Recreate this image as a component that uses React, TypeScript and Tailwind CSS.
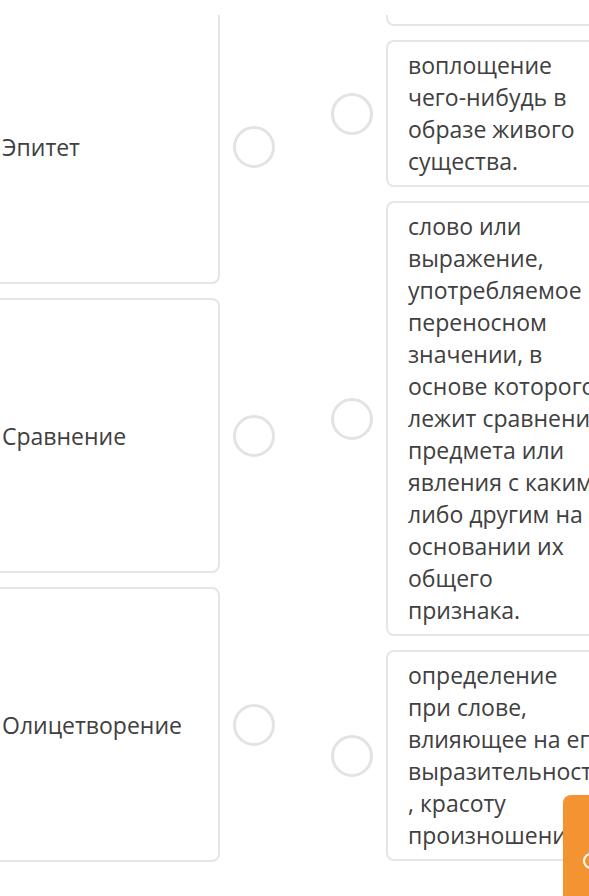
const TERMS = ["Эпитет", "Сравнение", "Олицетворение"];

const DEFINITIONS = [
  "яркое образное выражение.",
  "воплощение чего-нибудь в образе живого существа.",
  "слово или выражение, употребляемое в переносном значении, в основе которого лежит сравнение предмета или явления с каким-либо другим на основании их общего признака.",
  "определение при слове, влияющее на его выразительность , красоту произношения.",
];

function Circle() {
  return <div className="h-[42px] w-[42px] shrink-0 rounded-full border-[3.5px] border-[#e3e3e3]" />;
}

export default function App() {
  return (
    <div className="relative h-[896px] w-[589px] overflow-hidden bg-white font-['Open_Sans',sans-serif] text-[23px] leading-[32px] text-[#404040]">
      <div className="absolute inset-x-0 top-0 z-10 h-[15px] bg-white" />

      <div className="flex items-start">
        <div className="ml-[-20px] mt-[9px] flex flex-col gap-[14px]">
          {TERMS.map((t) => (
            <div key={t} className="flex items-center gap-[13px]">
              <div className="flex h-[275px] w-[240px] shrink-0 items-center rounded-lg border-2 border-[#e6e6e6] px-5">
                {t}
              </div>
              <Circle />
            </div>
          ))}
        </div>

        <div className="ml-[56px] mt-[-74px] flex flex-col gap-[14px]">
          {DEFINITIONS.map((d, i) => (
            <div key={i} className="flex items-center gap-[13px]">
              <Circle />
              <div
                className={`w-[240px] shrink-0 rounded-lg border-2 border-[#e6e6e6] px-5 pt-[7px] pb-2 ${
                  i === 0 ? "h-[100px] overflow-hidden" : ""
                }`}
              >
                {i === 0 ? "" : d}
              </div>
            </div>
          ))}
        </div>
      </div>

      <div className="absolute left-[563px] top-[795px] h-[140px] w-[80px] rounded-lg bg-[#f39331]">
        <div className="absolute left-[20px] top-[58px] h-[16px] w-[16px] rounded-full border-2 border-white" />
      </div>
    </div>
  );
}
